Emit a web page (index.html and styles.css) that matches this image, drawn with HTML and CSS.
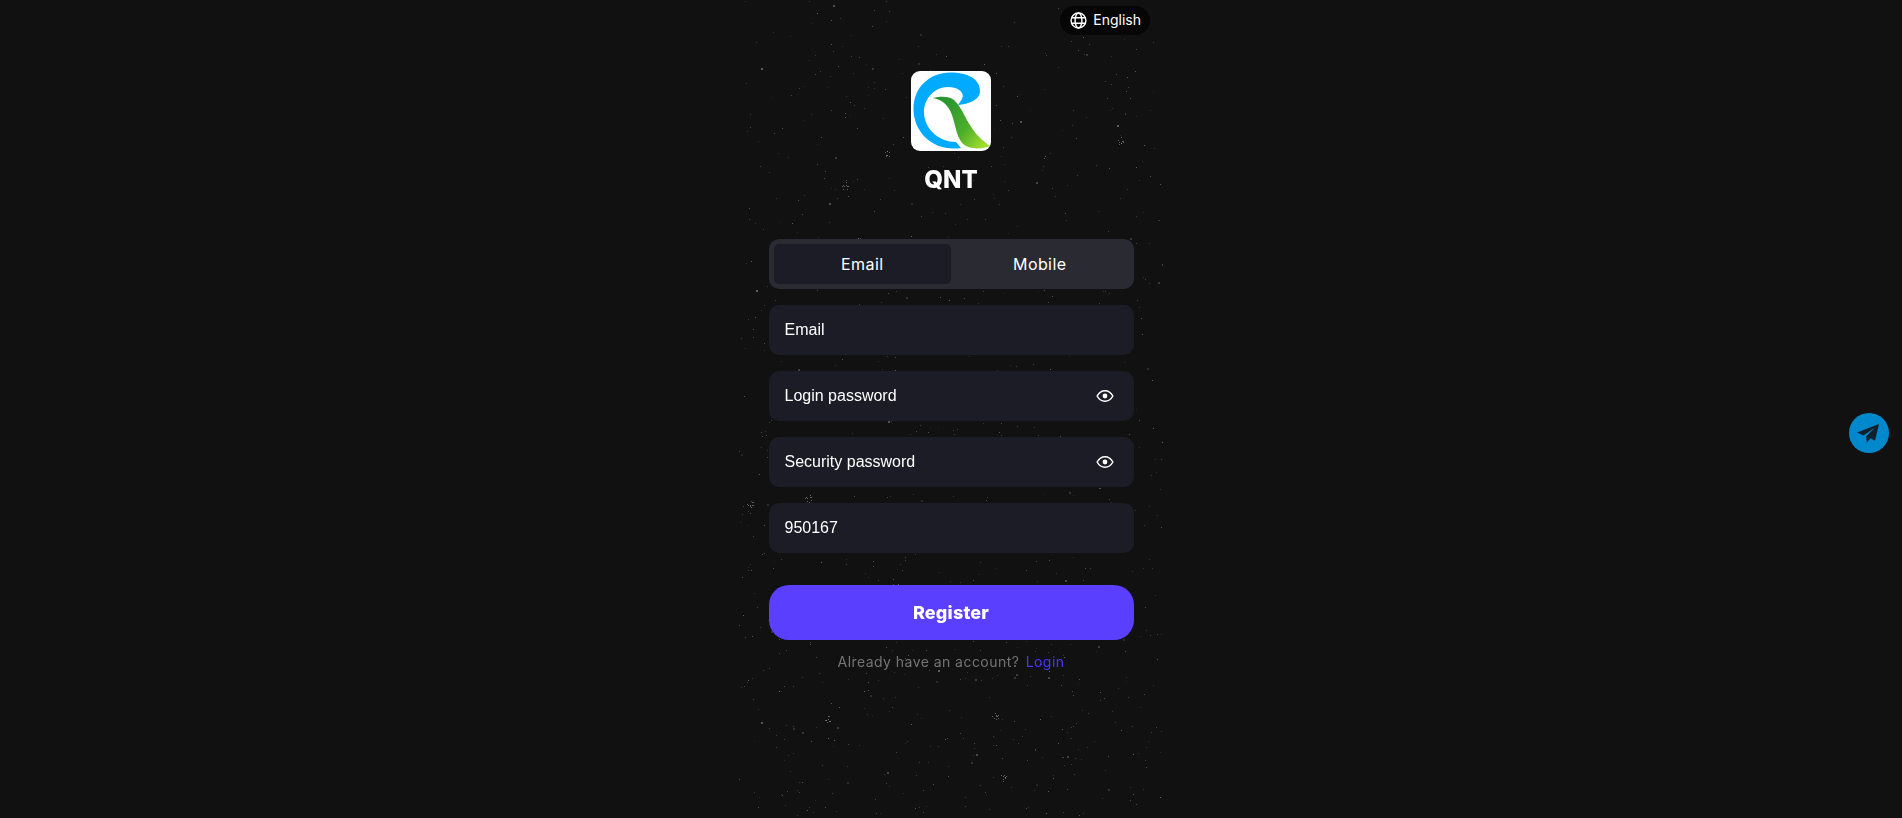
FILE: index.html
```html
<!DOCTYPE html>
<html lang="en">
<head>
  <meta charset="UTF-8" />
  <meta name="viewport" content="width=device-width, initial-scale=1.0"/>
  <title>Register | QNT</title>
  <link rel="stylesheet" href="styles.css">
</head>
<body>
  <div class="page">
    <canvas id="specks" class="specks" width="424" height="818"></canvas>

    <div class="top-bar">
      <div class="lang">
        <svg class="globe" viewBox="0 0 24 24" fill="none" stroke="#fff" stroke-width="2">
          <circle cx="12" cy="12" r="10.5"/>
          <ellipse cx="12" cy="12" rx="4.8" ry="10.5"/>
          <path d="M2.2 8.2h19.6M2.2 15.8h19.6"/>
        </svg>
        <span>English</span>
      </div>
    </div>

    <div class="brand">
      <svg class="logo" viewBox="0 0 80 80">
        <defs>
          <linearGradient id="leaf" x1="0.15" y1="0.2" x2="1" y2="0.85">
            <stop offset="0" stop-color="#2b952f"/>
            <stop offset="0.55" stop-color="#4cae2a"/>
            <stop offset="1" stop-color="#a6e02c"/>
          </linearGradient>
        </defs>
        <rect width="80" height="80" rx="9" fill="#fff"/>
        <path fill="#00aaff" d="M50 77C23 81 2.500 62 2.500 38C2.500 15 20 1.500 39 1.500C57 1.500 69 8 69 20C69 29 58 33 47 34L51 28C54 22 48 16 37 16C23 16 13 28 13 41C13 58 28 71 45 71Z"/>
        <path fill="url(#leaf)" d="M22 27C30 25 38 25 43 29C51 36 55 50 63 60C68 67 74 71 79 75C74 77 68 78 62 77C53 76 49 71 46 62C43 52 42 42 36 35C32 30 27 28 22 27Z"/>
      </svg>
      <h1>QNT</h1>
    </div>

    <form class="reg-form">
      <div class="tabs">
        <button type="button" class="tab active">Email</button>
        <button type="button" class="tab">Mobile</button>
      </div>

      <div class="field">
        <input type="text" placeholder="Email" />
      </div>
      <div class="field">
        <input type="password" placeholder="Login password" />
        <svg class="eye" viewBox="0 0 24 24" fill="none" stroke="#fff" stroke-width="2">
          <path d="M1.5 12C4 7.5 7.6 5 12 5s8 2.500 10.500 7C20 16.500 16.400 19 12 19s-8-2.500-10.500-7Z"/>
          <circle cx="12" cy="12" r="3.200" fill="#fff" stroke="none"/>
        </svg>
      </div>
      <div class="field">
        <input type="password" placeholder="Security password" />
        <svg class="eye" viewBox="0 0 24 24" fill="none" stroke="#fff" stroke-width="2">
          <path d="M1.5 12C4 7.5 7.6 5 12 5s8 2.500 10.500 7C20 16.500 16.400 19 12 19s-8-2.500-10.500-7Z"/>
          <circle cx="12" cy="12" r="3.200" fill="#fff" stroke="none"/>
        </svg>
      </div>
      <div class="field">
        <input type="text" value="950167" />
      </div>

      <button type="submit" class="submit-btn">Register</button>
      <p class="login-line">Already have an account? <a href="#">Login</a></p>
    </form>
  </div>

  <a href="#" class="telegram">
    <svg viewBox="0 0 40 40">
      <path fill="#10202c" d="M30 11L8 19.500L14.500 22.500L26 14.500L17 23.500L18 29.500L21.500 25.200L26 27.800Z"/>
    </svg>
  </a>

  <script src="specks.js"></script>
</body>
</html>
```

FILE: styles.css
```css
* {
  margin: 0;
  padding: 0;
  box-sizing: border-box;
}

html, body {
  height: 100%;
}

body {
  background: #111;
  font-family: Inter, sans-serif;
  color: #fff;
  overflow: hidden;
}

.page {
  position: relative;
  width: 424px;
  height: 818px;
  margin: 0 auto;
}

.specks {
  position: absolute;
  left: 0;
  top: 0;
}

.top-bar, .brand, .reg-form {
  position: relative;
}

.top-bar {
  display: flex;
  justify-content: flex-end;
  padding: 6px 13px 0 0;
}

.lang {
  display: flex;
  align-items: center;
  gap: 6px;
  height: 29px;
  padding: 0 9px 0 10px;
  background: #060606;
  border-radius: 15px;
  font-size: 14px;
}

.lang span {
  padding-bottom: 2px;
}

.globe {
  width: 17px;
  height: 17px;
}

.brand {
  display: flex;
  flex-direction: column;
  align-items: center;
  margin-top: 36px;
}

.logo {
  width: 80px;
  height: 80px;
}

h1 {
  margin-top: 14px;
  font-size: 24px;
  line-height: 30px;
  font-weight: 800;
}

.reg-form {
  width: 365px;
  margin: 44px auto 0;
}

.tabs {
  display: flex;
  height: 50px;
  padding: 5px;
  background: #2a2a33;
  border-radius: 10px;
}

.tab {
  flex: 1;
  background: none;
  border: none;
  border-radius: 5px;
  color: #fff;
  font-family: inherit;
  font-size: 16px;
  letter-spacing: 0.4px;
}

.tab.active {
  background: #1c1c26;
}

.field {
  display: flex;
  align-items: center;
  height: 50px;
  margin-top: 16px;
  padding: 0 20px 0 16px;
  background: #1c1c26;
  border-radius: 10px;
}

.field input {
  flex: 1;
  min-width: 0;
  background: none;
  border: none;
  outline: none;
  color: #fff;
  font-family: "Liberation Sans", Arial, sans-serif;
  font-size: 16px;
}

.field input::placeholder {
  color: #fff;
  opacity: 1;
}

.eye {
  width: 18px;
  height: 18px;
}

.submit-btn {
  display: block;
  width: 100%;
  height: 55px;
  margin-top: 32px;
  background: #5b3fff;
  border: none;
  border-radius: 20px;
  color: #fff;
  font-family: inherit;
  font-size: 18px;
  font-weight: 800;
  letter-spacing: 0.2px;
}

.login-line {
  margin-top: 12px;
  text-align: center;
  color: #747474;
  font-size: 14px;
  line-height: 20px;
  letter-spacing: 0.45px;
}

.login-line a {
  margin-left: 2px;
  color: #4a35ff;
  text-decoration: none;
}

.telegram {
  position: fixed;
  left: 1849px;
  top: 413px;
  width: 40px;
  height: 40px;
  background: #0088cc;
  border-radius: 50%;
}

.telegram svg {
  display: block;
}
```

FILE: specks.js
```js
// dust behind the form, fixed seed so it comes out the same every load
const ctx = document.getElementById('specks').getContext('2d');

let seed = 20417;
function rnd() {
  seed = (seed * 16807) % 2147483647;
  return seed / 2147483647;
}

for (let i = 0; i < 1100; i++) {
  const x = rnd() * 424;
  // a bit thicker towards the bottom of the page
  const y = Math.pow(rnd(), 0.8) * 818;
  const big = rnd() < 0.05;
  const grey = 90 + Math.floor(rnd() * 80);
  ctx.fillStyle = `rgba(${grey}, ${grey}, ${grey}, ${0.2 + rnd() * 0.4})`;
  ctx.fillRect(Math.floor(x), Math.floor(y), big ? 2 : 1, big ? 2 : 1);
}

// the few larger clumps, page x minus 739
const clumps = [[148, 153], [106, 186], [88, 719], [264, 777], [256, 716], [70, 498], [381, 140], [12, 505]];
clumps.forEach(([x, y]) => {
  for (let i = 0; i < 9; i++) {
    const a = rnd() * Math.PI * 2;
    const r = 1 + rnd() * 3;
    ctx.fillStyle = 'rgba(150, 150, 150, 0.6)';
    ctx.fillRect(Math.round(x + Math.cos(a) * r), Math.round(y + Math.sin(a) * r), 1, 1);
  }
});
```
